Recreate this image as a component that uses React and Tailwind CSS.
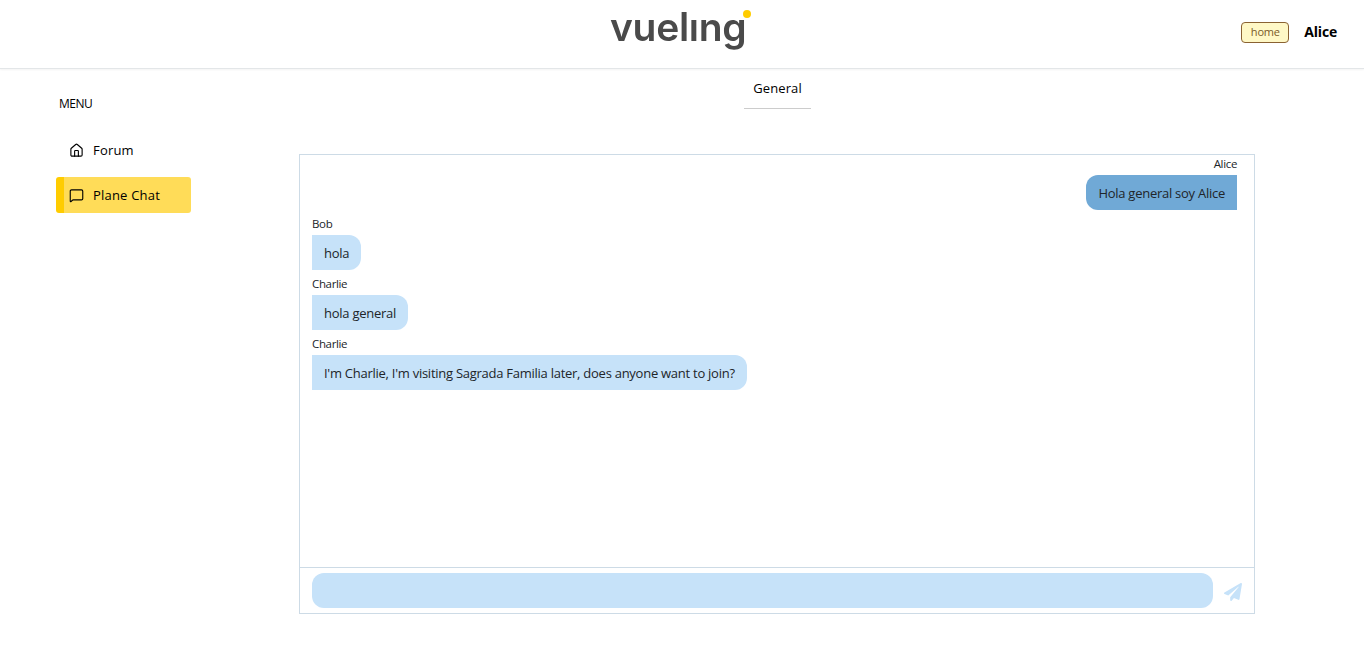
import React from 'react';
import { House, MessageSquare } from 'lucide-react';
import { FaPaperPlane } from 'react-icons/fa';

const messages = [
  { id: 1, user: 'Alice', text: 'Hola general soy Alice', own: true },
  { id: 2, user: 'Bob', text: 'hola' },
  { id: 3, user: 'Charlie', text: 'hola general' },
  { id: 4, user: 'Charlie', text: "I'm Charlie, I'm visiting Sagrada Familia later, does anyone want to join?" },
];

const Message = ({ user, text, own }) => (
  <div className={`flex flex-col mb-[5px] ${own ? 'items-end' : 'items-start'}`}>
    <div className="h-5 pb-[2px] flex items-center text-[11.5px] tracking-[-0.35px] text-[#212529]">{user}</div>
    <div
      className={`h-[35px] pt-[2px] px-3 flex items-center text-[13px] tracking-[-0.26px] text-[#212529] ${
        own ? 'bg-[#70a9d6] rounded-l-xl' : 'bg-[#c6e2f9] rounded-r-xl'
      }`}
    >
      {text}
    </div>
  </div>
);

const App = () => {
  return (
    <div className="h-[649px] bg-white overflow-hidden font-['Open_Sans','Noto_Sans',sans-serif] text-black">
      <header className="relative h-[69px] flex items-center justify-end pr-[27px] pb-[4px] border-b border-[#e3e6e8] shadow-[0_1px_2px_rgba(0,0,0,0.05)]">
        <div className="absolute left-[610px] top-[4px] flex items-start blur-[0.4px]">
          <span className="font-['Inter',sans-serif] text-[39px] leading-[46px] font-semibold tracking-[-0.3px] text-[#4a4a4a]">
            vuelıng
          </span>
          <span className="absolute left-[133px] top-[6px] w-2 h-2 rounded-full bg-[#ffcc00]"></span>
        </div>
        <span className="w-[48px] h-[21px] flex items-center justify-center rounded-[4px] border border-[#8a6232] bg-[#fff8c6] text-[11px] tracking-[-0.2px] text-[#7a5a28]">
          home
        </span>
        <span className="ml-[15px] mb-[2px] text-[14px] font-bold tracking-[-0.2px]">Alice</span>
      </header>

      <div className="flex">
        <aside className="w-[299px] shrink-0 pl-[56px]">
          <div className="pl-[3px] mt-[25px] h-5 flex items-center text-[12px] tracking-[-0.5px]">MENU</div>
          <nav className="mt-[18px] w-[135px] flex flex-col gap-[9px]">
            <a className="h-9 flex items-center pl-[13px] gap-[9px] text-[13px] tracking-[0.2px]">
              <House size={15} strokeWidth={1.8} />
              <span className="pt-[2px]">Forum</span>
            </a>
            <a className="h-9 flex items-center pl-[5px] gap-[9px] text-[13px] tracking-[0.2px] bg-[#ffdc58] border-l-[8px] border-[#ffcc00] rounded-[3px]">
              <MessageSquare size={15} strokeWidth={1.8} />
              <span className="pt-[2px]">Plane Chat</span>
            </a>
          </nav>
        </aside>

        <main className="w-[956px]">
          <div className="flex justify-center pl-[1px]">
            <div className="w-[67px] h-[40px] flex items-center justify-center border-b border-[#cccccc] text-[13px] tracking-[0.1px]">
              General
            </div>
          </div>
          <section className="mt-[45px] h-[460px] flex flex-col border border-[#cddbe6]">
            <div className="flex-1 pl-3 pr-[17px]">
              {messages.map((m) => (
                <Message key={m.id} user={m.user} text={m.text} own={m.own} />
              ))}
            </div>
            <div className="h-[46px] flex items-center pl-3 border-t border-[#cddbe6]">
              <input className="w-[901px] h-[35px] rounded-xl bg-[#c6e2f9] outline-none" />
              <FaPaperPlane className="ml-[11px] mt-[2px] text-[#c6e2f9]" size={18} />
            </div>
          </section>
        </main>
      </div>
    </div>
  );
};

export default App;
